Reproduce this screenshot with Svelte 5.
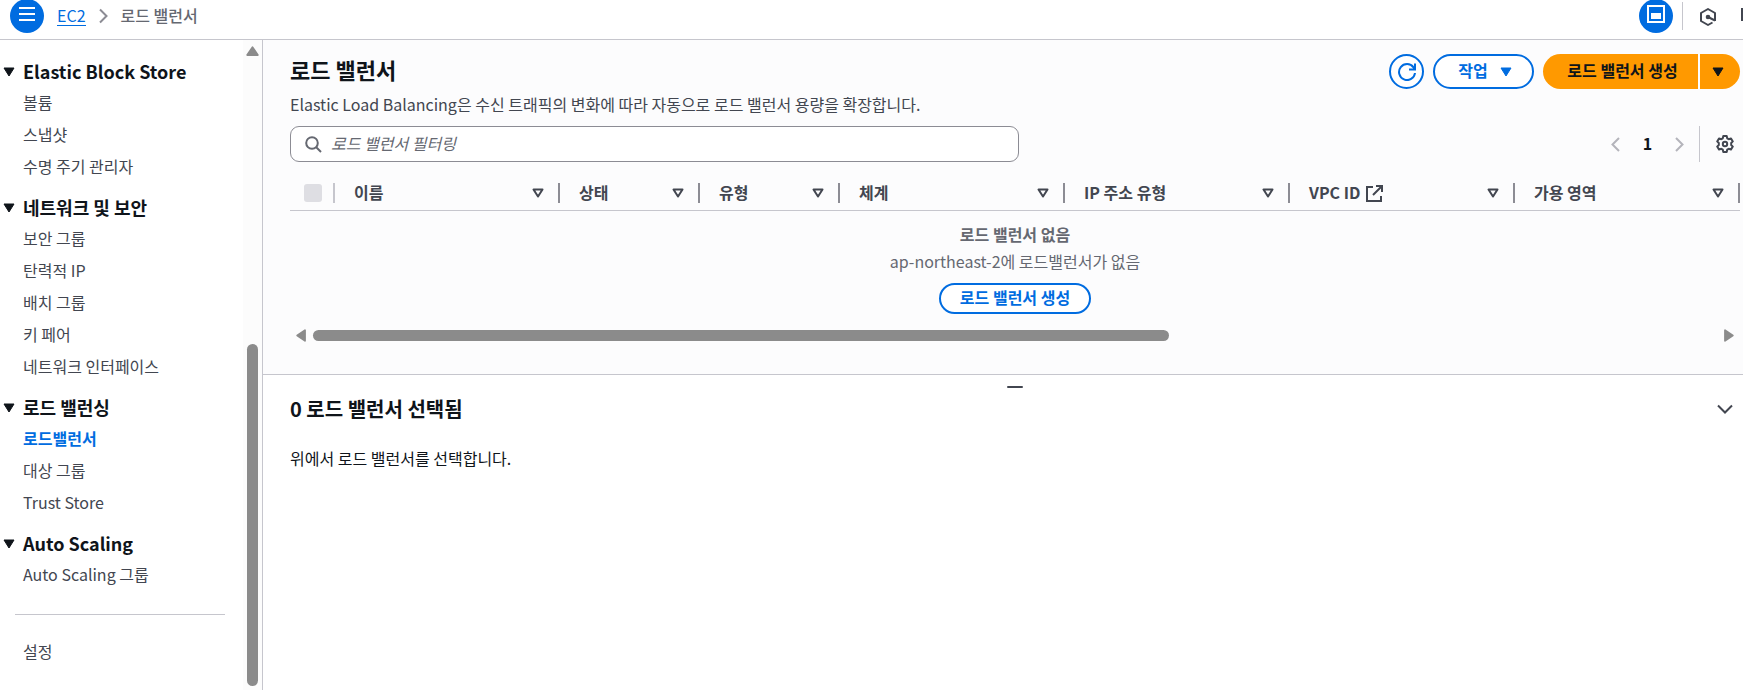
<script>
  const groups = [
    { title: 'Elastic Block Store', items: ['볼륨', '스냅샷', '수명 주기 관리자'] },
    { title: '네트워크 및 보안', items: ['보안 그룹', '탄력적 IP', '배치 그룹', '키 페어', '네트워크 인터페이스'] },
    { title: '로드 밸런싱', items: ['로드밸런서', '대상 그룹', 'Trust Store'] },
    { title: 'Auto Scaling', items: ['Auto Scaling 그룹'] }
  ];
  const columns = [
    { label: '이름', size: 'wide' },
    { label: '상태', size: 'narrow' },
    { label: '유형', size: 'narrow' },
    { label: '체계', size: 'wide' },
    { label: 'IP 주소 유형', size: 'wide' },
    { label: 'VPC ID', size: 'wide', external: true },
    { label: '가용 영역', size: 'wide' }
  ];
  const active = '로드밸런서';
  let filter = $state('');
</script>

{#snippet caret()}
  <svg class="caret" viewBox="0 0 12 10" aria-hidden="true"><path d="M1 1h10L6 9z" fill="currentColor" stroke="currentColor" stroke-linejoin="round" /></svg>
{/snippet}

<div class="page">
  <header class="topbar">
    <button class="round" aria-label="메뉴">
      <svg width="16" height="16" viewBox="0 0 16 16"><path d="M0 2h16M0 8h16M0 14h16" stroke="currentColor" stroke-width="2" /></svg>
    </button>
    <nav class="crumbs" aria-label="이동 경로">
      <a href="#ec2">EC2</a>
      <svg width="9" height="16" viewBox="0 0 9 16"><path d="M1 1.500l6.500 6.500L1 14.500" fill="none" stroke="#8c8c94" stroke-width="2" /></svg>
      <span>로드 밸런서</span>
    </nav>
    <div class="tools">
      <button class="round" aria-label="분할 패널">
        <svg width="18" height="18" viewBox="0 0 18 18"><path d="M1 1h16v16H1z" fill="none" stroke="currentColor" stroke-width="2" /><path d="M4 8h10v6H4z" fill="currentColor" /></svg>
      </button>
      <span class="bar"></span>
      <button class="plain" aria-label="진단">
        <svg width="18" height="18" viewBox="0 0 18 18"><path d="M13.500 14.500L9 17l-7-4V5l7-4 7 4v8" fill="none" stroke="currentColor" stroke-width="2" stroke-linejoin="round" /><circle cx="9" cy="9" r="2.300" fill="currentColor" /><path d="M9 9l7 3.500" stroke="currentColor" stroke-width="2" /></svg>
      </button>
      <span class="edge"></span>
    </div>
  </header>

  <div class="body">
    <aside>
      <nav class="menu" aria-label="EC2">
        {#each groups as g}
          <section>
            <h2>{@render caret()}{g.title}</h2>
            <ul>
              {#each g.items as item}
                <li><a href="#menu" class:active={item === active}>{item}</a></li>
              {/each}
            </ul>
          </section>
        {/each}
        <hr />
        <a class="settings" href="#settings">설정</a>
      </nav>
      <div class="vscroll" aria-hidden="true">
        <svg width="13" height="10" viewBox="0 0 13 10"><path d="M6.500 1.200L1.200 9h10.600z" fill="#8b8b8b" stroke="#8b8b8b" stroke-width="1.800" stroke-linejoin="round" /></svg>
        <span class="before"></span>
        <span class="thumb"></span>
      </div>
    </aside>

    <main>
      <section class="list">
        <div class="head">
          <div>
            <h1>로드 밸런서</h1>
            <p>Elastic Load Balancing은 수신 트래픽의 변화에 따라 자동으로 로드 밸런서 용량을 확장합니다.</p>
          </div>
          <div class="actions">
            <button class="outline refresh" aria-label="새로 고침">
              <svg width="18" height="18" viewBox="0 0 18 18"><path d="M17 10A8 8 0 1 1 15.500 4.300L17 6.200M17 0.500v6h-6" fill="none" stroke="currentColor" stroke-width="2" /></svg>
            </button>
            <button class="outline action"><span>작업</span> {@render caret()}</button>
            <div class="split">
              <button class="create"><span>로드 밸런서 생성</span></button>
              <button class="more" aria-label="추가 옵션">{@render caret()}</button>
            </div>
          </div>
        </div>

        <div class="filters">
          <label class="search">
            <svg width="17" height="17" viewBox="0 0 17 17"><circle cx="7" cy="7" r="5.800" fill="none" stroke="currentColor" stroke-width="2" /><path d="M11 11l5 5" stroke="currentColor" stroke-width="2" /></svg>
            <input type="text" placeholder="로드 밸런서 필터링" aria-label="로드 밸런서 필터링" bind:value={filter} />
          </label>
          <div class="pager">
            <button class="plain muted" aria-label="이전 페이지"><svg width="9" height="15" viewBox="0 0 9 15"><path d="M8 1L1.500 7.500 8 14" fill="none" stroke="currentColor" stroke-width="2" /></svg></button>
            <button class="plain num">1</button>
            <button class="plain muted" aria-label="다음 페이지"><svg width="9" height="15" viewBox="0 0 9 15"><path d="M1 1l6.500 6.500L1 14" fill="none" stroke="currentColor" stroke-width="2" /></svg></button>
            <span class="rule"></span>
            <button class="plain" aria-label="기본 설정">
              <svg width="18" height="18" viewBox="0 0 18 18"><path d="M7.300 1h3.400l.5 2.300 1.500.9 2.300-.8L16.800 6.400 15.200 8v2l1.600 1.600-1.800 3-2.300-.8-1.500.9-.5 2.300H7.300l-.5-2.300-1.500-.9-2.300.8-1.800-3L2.800 10V8L1.200 6.400 3 3.400l2.300.8 1.500-.9z" fill="none" stroke="currentColor" stroke-width="2" stroke-linejoin="round" /><circle cx="9" cy="9" r="2.200" fill="none" stroke="currentColor" stroke-width="2" /></svg>
            </button>
          </div>
        </div>

        <table>
          <colgroup>
            <col class="check" />
            {#each columns as c}<col class={c.size} />{/each}
          </colgroup>
          <thead>
            <tr>
              <th><div class="cell first"><input type="checkbox" disabled aria-label="모두 선택" /></div></th>
              {#each columns as c}
                <th>
                  <div class="cell">
                    <span>{c.label}</span>
                    {#if c.external}
                      <svg class="ext" width="17" height="17" viewBox="0 0 17 17"><path d="M7 2H1v14h14v-5M10 1h6v6M16 1L7 10" fill="none" stroke="currentColor" stroke-width="2" /></svg>
                    {/if}
                    <svg class="sort" width="12" height="10" viewBox="0 0 12 10"><path d="M1.500 1.500h9L6 8.500z" fill="none" stroke="currentColor" stroke-width="2" stroke-linejoin="round" /></svg>
                  </div>
                </th>
              {/each}
            </tr>
          </thead>
          <tbody>
            <tr>
              <td colspan="8">
                <strong>로드 밸런서 없음</strong>
                <p>ap-northeast-2에 로드밸런서가 없음</p>
                <button class="outline small"><span>로드 밸런서 생성</span></button>
              </td>
            </tr>
          </tbody>
        </table>

        <div class="hscroll" aria-hidden="true">
          <svg width="10" height="13" viewBox="0 0 10 13"><path d="M1.200 6.500L9 1.200v10.600z" fill="#8b8b8b" stroke="#8b8b8b" stroke-width="1.800" stroke-linejoin="round" /></svg>
          <div class="track"><span class="thumb"></span></div>
          <svg width="10" height="13" viewBox="0 0 10 13"><path d="M8.800 6.500L1 1.200v10.600z" fill="#8b8b8b" stroke="#8b8b8b" stroke-width="1.800" stroke-linejoin="round" /></svg>
        </div>
      </section>

      <section class="panel">
        <div class="handle"></div>
        <div class="panelhead">
          <h2>0 로드 밸런서 선택됨</h2>
          <button class="plain" aria-label="패널 닫기"><svg width="16" height="10" viewBox="0 0 16 10"><path d="M1 1.500l7 7 7-7" fill="none" stroke="currentColor" stroke-width="2" /></svg></button>
        </div>
        <p>위에서 로드 밸런서를 선택합니다.</p>
      </section>
    </main>
  </div>
</div>

<style>
  :global(body) { margin: 0; background: #fff; }
  * { box-sizing: border-box; }
  .page {
    height: 100vh;
    display: flex;
    flex-direction: column;
    overflow: hidden;
    font: 400 16px/22px "Noto Sans CJK KR", sans-serif;
    color: #424650;
  }
  h1, h2, p, ul { margin: 0; padding: 0; }
  ul { list-style: none; }
  button { font: inherit; cursor: pointer; padding: 0; border: 0; background: none; color: inherit; }
  svg { display: block; flex: none; }
  a { color: inherit; text-decoration: none; }
  .caret { width: 12px; height: 10px; }

  .topbar {
    flex: none;
    display: flex;
    align-items: flex-start;
    height: 40px;
    padding-left: 10px;
    border-bottom: 1px solid #c6c6cd;
    overflow: hidden;
  }
  .round {
    flex: none;
    width: 34px;
    height: 34px;
    margin-top: -1px;
    padding-bottom: 4px;
    border-radius: 50%;
    background: #006ce0;
    color: #fff;
    display: flex;
    align-items: center;
    justify-content: center;
  }
  .crumbs { display: flex; align-items: center; gap: 13px; height: 31px; margin-left: 13px; }
  .crumbs a { color: #006ce0; line-height: 20px; border-bottom: 1px solid #006ce0; }
  .crumbs span { color: #656871; font-weight: 500; padding-bottom: 1px; }
  .tools { display: flex; align-items: flex-start; margin-left: auto; }
  .bar { width: 1px; height: 28px; margin: 2px 16px 0 9px; background: #c6c6cd; }
  .tools .plain { margin-top: 8px; }
  .edge { width: 2px; height: 13px; margin: 8px 0 0 24px; background: #424650; }

  .body { flex: 1; min-height: 0; display: flex; }
  aside { flex: none; width: 263px; display: flex; border-right: 1px solid #c6c6cd; }
  .menu { flex: 1; padding: 16px 0 0 3px; }
  .menu section { margin-bottom: 10px; }
  .menu h2 {
    display: flex;
    align-items: center;
    gap: 8px;
    height: 30px;
    font-size: 18px;
    font-weight: 700;
    color: #0f141a;
  }
  .menu .caret { margin-top: 2px; }
  .menu li { height: 32px; padding-left: 20px; line-height: 32px; }
  .menu .active { color: #006ce0; font-weight: 700; }
  hr { height: 1px; border: 0; margin: 24px 18px 20px 12px; background: #c6c6cd; }
  .settings { display: block; padding-left: 20px; line-height: 32px; }
  .vscroll {
    width: 19px;
    padding: 6px 0 4px;
    display: flex;
    flex-direction: column;
    align-items: center;
    background: #fcfcfc;
  }
  .vscroll .before { flex: 288; }
  .vscroll .thumb { flex: 342; width: 11px; border-radius: 6px; background: #8b8b8b; }

  main { flex: 1; min-width: 0; display: flex; flex-direction: column; }
  .list { padding: 14px 3px 32px 27px; background: #fcfcfd; border-bottom: 1px solid #c6c6cd; }
  .head { display: flex; justify-content: space-between; }
  h1 { font-size: 22px; line-height: 30px; font-weight: 700; color: #0f141a; }
  .head p { margin-top: 9px; }
  .actions { display: flex; gap: 9px; }
  .outline, .split button {
    height: 35px;
    border-radius: 18px;
    font-weight: 700;
    display: flex;
    align-items: center;
    justify-content: center;
  }
  .outline span, .split span { padding-bottom: 4px; }
  .outline { border: 2px solid #006ce0; color: #006ce0; background: #fff; }
  .refresh { width: 35px; }
  .action { width: 101px; gap: 12px; padding-left: 3px; }
  .split { display: flex; gap: 2px; }
  .split button { background: #ff9900; color: #0f141a; }
  .split .create { width: 155px; padding-left: 4px; border-radius: 18px 0 0 18px; }
  .split .more { width: 40px; padding-right: 4px; border-radius: 0 18px 18px 0; }

  .filters { display: flex; justify-content: space-between; margin-top: 11px; }
  .search {
    width: 729px;
    height: 36px;
    display: flex;
    align-items: center;
    gap: 9px;
    padding: 0 14px;
    border: 1px solid #8c8c94;
    border-radius: 9px;
    background: #fff;
    color: #656871;
  }
  .search input { flex: 1; border: 0; outline: 0; padding: 0 0 2px; background: none; font: inherit; color: #0f141a; }
  .search input::placeholder { color: #656871; font-style: italic; opacity: 1; }
  .pager { display: flex; align-items: center; padding-right: 6px; }
  .muted { color: #b4b4bb; }
  .num { width: 55px; padding-bottom: 2px; font-weight: 700; color: #0f141a; }
  .rule { width: 1px; height: 36px; margin: 0 16px 0 15px; background: #c6c6cd; }

  table { width: 100%; table-layout: fixed; border-collapse: collapse; }
  .check { width: 45px; }
  .wide { width: 225px; }
  .narrow { width: 140px; }
  thead tr { border-bottom: 1px solid #c6c6cd; }
  th { padding: 21px 0 7px; text-align: left; font-weight: 700; }
  .cell { display: flex; align-items: center; height: 20px; padding: 0 14px 0 19px; border-right: 2px solid #8c8c94; }
  .cell span { padding-bottom: 2px; }
  .first { padding: 0 0 0 14px; border-color: #c6c6cd; }
  .sort { margin-left: auto; }
  .ext { margin-left: 6px; }
  input[type="checkbox"] { appearance: none; width: 18px; height: 18px; margin: 0; border-radius: 3px; background: #dedee3; }
  td { padding: 12px 0 0; text-align: center; color: #656871; }
  td strong { display: block; font-weight: 700; }
  td p { margin-top: 5px; }
  .small { height: 31px; margin: 11px auto 0; padding: 0 19px; }

  .hscroll { display: flex; align-items: center; gap: 7px; margin-top: 15px; padding: 0 6px; }
  .track { flex: 1; }
  .track .thumb { display: block; width: 61%; height: 11px; border-radius: 6px; background: #8b8b8b; }

  .panel { flex: 1; padding: 11px 3px 0 27px; background: #fff; color: #0f141a; }
  .handle { width: 16px; height: 2px; margin: 0 auto; border-radius: 1px; background: #424650; }
  .panelhead { display: flex; align-items: center; justify-content: space-between; margin-top: 8px; padding-right: 7px; }
  .panelhead h2 { font-size: 20px; line-height: 26px; font-weight: 700; }
  .panelhead .plain { color: #424650; }
  .panel p { margin-top: 25px; }
</style>
